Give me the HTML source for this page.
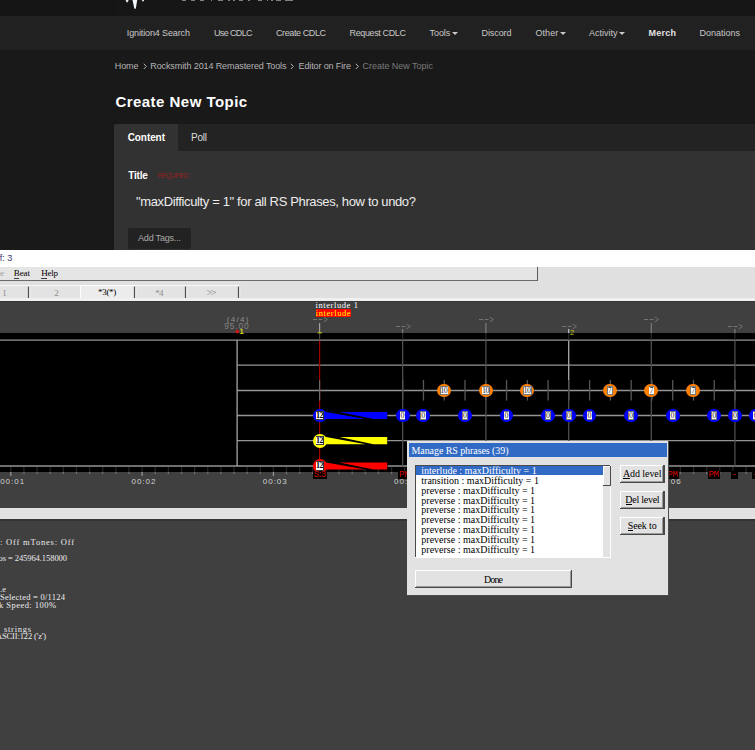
<!DOCTYPE html>
<html><head><meta charset="utf-8"><title>Create New Topic</title>
<style>
html,body{margin:0;padding:0;}
body{width:755px;height:750px;overflow:hidden;background:#191919;position:relative;font-family:"Liberation Sans", sans-serif;}
#root{position:absolute;left:0;top:0;width:755px;height:750px;overflow:hidden;}
#root div,#root span,#root svg{position:absolute;display:block;}
#root span{white-space:pre;line-height:1;}
</style></head><body><div id="root">
<div style="left:0.00px;top:0.00px;width:755.00px;height:16.00px;background:#161616;"></div>
<div style="left:0.00px;top:0.00px;width:115.00px;height:16.00px;background:#151515;"></div>
<svg style="left:120px;top:0" width="180" height="12" viewBox="0 0 180 12"><polygon points="12.5,0 17.2,0 16,7.6 15.4,9.1 14.7,9.1 14.1,7.6" fill="#f2f7fa"/><polygon points="5.6,0 8.6,0 7.8,2.3 6.5,2.3" fill="#e4e8ea"/><polygon points="21.8,0 24.2,0 23.4,1.4 22.6,1.4" fill="#e4e8ea"/></svg>
<div style="left:181.60px;top:0.00px;width:4.30px;height:1.20px;background:#808080;"></div>
<div style="left:191.20px;top:0.00px;width:4.00px;height:1.20px;background:#808080;"></div>
<div style="left:200.20px;top:0.00px;width:3.80px;height:1.20px;background:#808080;"></div>
<div style="left:210.60px;top:0.00px;width:1.40px;height:1.20px;background:#808080;"></div>
<div style="left:218.40px;top:0.00px;width:4.60px;height:1.20px;background:#808080;"></div>
<div style="left:228.00px;top:0.00px;width:2.00px;height:1.20px;background:#808080;"></div>
<div style="left:233.00px;top:0.00px;width:1.60px;height:1.20px;background:#808080;"></div>
<div style="left:238.70px;top:0.00px;width:4.20px;height:1.20px;background:#808080;"></div>
<div style="left:248.20px;top:0.00px;width:1.50px;height:1.20px;background:#808080;"></div>
<div style="left:257.80px;top:0.00px;width:4.20px;height:1.20px;background:#808080;"></div>
<div style="left:266.90px;top:0.00px;width:1.60px;height:1.20px;background:#808080;"></div>
<div style="left:271.00px;top:0.00px;width:1.70px;height:1.20px;background:#808080;"></div>
<div style="left:276.30px;top:0.00px;width:4.70px;height:1.20px;background:#808080;"></div>
<div style="left:285.00px;top:0.00px;width:8.40px;height:1.20px;background:#808080;"></div>
<div style="left:0.00px;top:16.00px;width:755.00px;height:33.60px;background:#212121;"></div>
<span style="left:126.80px;top:29.00px;font-size:9px;color:#c8c8c8;letter-spacing:-0.123px;">Ignition4 Search</span>
<span style="left:214.00px;top:29.00px;font-size:9px;color:#c8c8c8;letter-spacing:-0.645px;">Use CDLC</span>
<span style="left:276.00px;top:29.00px;font-size:9px;color:#c8c8c8;letter-spacing:-0.403px;">Create CDLC</span>
<span style="left:349.50px;top:29.00px;font-size:9px;color:#c8c8c8;letter-spacing:-0.366px;">Request CDLC</span>
<span style="left:429.50px;top:29.00px;font-size:9px;color:#c8c8c8;letter-spacing:-0.054px;">Tools</span>
<span style="left:481.50px;top:29.00px;font-size:9px;color:#c8c8c8;letter-spacing:-0.086px;">Discord</span>
<span style="left:535.50px;top:29.00px;font-size:9px;color:#c8c8c8;letter-spacing:0.046px;">Other</span>
<span style="left:589.10px;top:29.00px;font-size:9px;color:#c8c8c8;letter-spacing:-0.002px;">Activity</span>
<span style="left:699.50px;top:29.00px;font-size:9px;color:#c8c8c8;letter-spacing:-0.004px;">Donations</span>
<span style="left:648.50px;top:29.00px;font-size:9px;font-weight:bold;color:#e2e2e2;letter-spacing:0.246px;">Merch</span>
<div style="left:452.3px;top:31.8px;width:0;height:0;border-left:3.2px solid transparent;border-right:3.2px solid transparent;border-top:3.4px solid #c8c8c8;"></div>
<div style="left:560.2px;top:31.8px;width:0;height:0;border-left:3.2px solid transparent;border-right:3.2px solid transparent;border-top:3.4px solid #c8c8c8;"></div>
<div style="left:619.4px;top:31.8px;width:0;height:0;border-left:3.2px solid transparent;border-right:3.2px solid transparent;border-top:3.4px solid #c8c8c8;"></div>
<span style="left:114.80px;top:62.00px;font-size:9px;color:#b4b4b4;letter-spacing:-0.139px;">Home</span>
<span style="left:150.30px;top:62.00px;font-size:9px;color:#b4b4b4;letter-spacing:-0.107px;">Rocksmith 2014 Remastered Tools</span>
<span style="left:298.50px;top:62.00px;font-size:9px;color:#b4b4b4;letter-spacing:-0.118px;">Editor on Fire</span>
<svg style="left:142.6px;top:62.5px" width="5" height="7" viewBox="0 0 5 7"><polyline points="0.8,0.8 3.4,3.4 0.8,6" fill="none" stroke="#b4b4b4" stroke-width="1"/></svg>
<svg style="left:290px;top:62.5px" width="5" height="7" viewBox="0 0 5 7"><polyline points="0.8,0.8 3.4,3.4 0.8,6" fill="none" stroke="#b4b4b4" stroke-width="1"/></svg>
<svg style="left:355px;top:62.5px" width="5" height="7" viewBox="0 0 5 7"><polyline points="0.8,0.8 3.4,3.4 0.8,6" fill="none" stroke="#b4b4b4" stroke-width="1"/></svg>
<span style="left:362.50px;top:62.00px;font-size:9px;color:#7a7a7a;letter-spacing:-0.025px;">Create New Topic</span>
<span style="left:115.40px;top:94.00px;font-size:15px;font-weight:bold;color:#ffffff;letter-spacing:0.469px;">Create New Topic</span>
<div style="left:114.20px;top:124.00px;width:641.00px;height:126.00px;background:#323232;border-radius:2px 0 0 0;"></div>
<div style="left:178.00px;top:124.00px;width:577.00px;height:27.20px;background:#232323;"></div>
<span style="left:127.70px;top:133.00px;font-size:10px;font-weight:bold;color:#ffffff;letter-spacing:-0.080px;">Content</span>
<span style="left:191.00px;top:133.00px;font-size:10px;color:#dddddd;letter-spacing:-0.229px;">Poll</span>
<span style="left:128.20px;top:171.00px;font-size:10px;font-weight:bold;color:#ffffff;letter-spacing:-0.198px;">Title</span>
<span style="left:157.40px;top:172.00px;font-size:7.5px;color:#8e2222;letter-spacing:-1.099px;">REQUIRED</span>
<span style="left:136.00px;top:195.00px;font-size:13px;color:#ececec;letter-spacing:-0.361px;">"maxDifficulty = 1" for all RS Phrases, how to undo?</span>
<div style="left:127.70px;top:228.00px;width:63.50px;height:20.60px;background:#222222;border-radius:2px;"></div>
<span style="left:138.00px;top:234.00px;font-size:9px;color:#a8a8a8;letter-spacing:-0.188px;">Add Tags...</span>
<div style="left:0.00px;top:250.00px;width:755.00px;height:17.00px;background:#ffffff;"></div>
<span style="left:-2.60px;top:254.00px;font-size:9px;color:#3a3474;">ff: 3</span>
<div style="left:0.00px;top:267.00px;width:755.00px;height:34.00px;background:#e0e0e0;"></div>
<div style="left:0.00px;top:267.00px;width:537.00px;height:13.00px;background:#e5e5e5;"></div>
<span style="left:0.00px;top:269.00px;font-size:9px;font-family:'Liberation Serif', serif;color:#a0a0a0;">e</span>
<span style="left:13.80px;top:269.00px;font-size:9px;font-family:'Liberation Serif', serif;color:#000;letter-spacing:-0.100px;">Beat</span>
<span style="left:41.30px;top:269.00px;font-size:9px;font-family:'Liberation Serif', serif;color:#000;letter-spacing:-0.267px;">Help</span>
<div style="left:13.90px;top:277.70px;width:5.20px;height:1.00px;background:#3a3a3a;"></div>
<div style="left:41.20px;top:277.70px;width:5.60px;height:1.00px;background:#3a3a3a;"></div>
<div style="left:0.00px;top:279.80px;width:538.00px;height:1.50px;background:#6c6c6c;"></div>
<div style="left:536.60px;top:267.00px;width:1.50px;height:14.20px;background:#5c5c5c;"></div>
<div style="left:0.00px;top:285.00px;width:238.60px;height:1.20px;background:#f6f6f6;"></div>
<div style="left:0.00px;top:286.20px;width:238.60px;height:12.00px;background:#e3e3e3;"></div>
<div style="left:81.00px;top:285.20px;width:53.60px;height:13.60px;background:#ececec;"></div>
<div style="left:81.00px;top:285.20px;width:53.60px;height:1.00px;background:#ffffff;"></div>
<div style="left:80.30px;top:285.20px;width:1.00px;height:13.60px;background:#ffffff;"></div>
<svg style="left:0;top:0" width="755" height="750" viewBox="0 0 755 750"><line x1="28.60" y1="286.60" x2="28.60" y2="298.40" stroke="#4e4e4e" stroke-width="1.4"/><line x1="29.80" y1="286.60" x2="29.80" y2="298.40" stroke="#f4f4f4" stroke-width="1"/><line x1="134.60" y1="286.60" x2="134.60" y2="298.40" stroke="#4e4e4e" stroke-width="1.4"/><line x1="135.80" y1="286.60" x2="135.80" y2="298.40" stroke="#f4f4f4" stroke-width="1"/><line x1="185.60" y1="286.60" x2="185.60" y2="298.40" stroke="#4e4e4e" stroke-width="1.4"/><line x1="186.80" y1="286.60" x2="186.80" y2="298.40" stroke="#f4f4f4" stroke-width="1"/><line x1="238.60" y1="286.60" x2="238.60" y2="298.40" stroke="#4e4e4e" stroke-width="1.4"/><line x1="239.80" y1="286.60" x2="239.80" y2="298.40" stroke="#f4f4f4" stroke-width="1"/></svg>
<span style="left:2.20px;top:289.00px;font-size:9px;font-family:'Liberation Serif', serif;color:#8c8c8c;">1</span>
<span style="left:54.20px;top:289.00px;font-size:9px;font-family:'Liberation Serif', serif;color:#8c8c8c;">2</span>
<span style="left:98.10px;top:288.00px;font-size:9px;font-family:'Liberation Serif', serif;color:#000;letter-spacing:-0.350px;">*3(*)</span>
<span style="left:155.30px;top:289.00px;font-size:9px;font-family:'Liberation Serif', serif;color:#8c8c8c;letter-spacing:-0.900px;">*4</span>
<span style="left:206.60px;top:288.00px;font-size:10px;font-family:'Liberation Serif', serif;color:#808080;letter-spacing:-1.481px;">&gt;&gt;</span>
<div style="left:0.00px;top:298.30px;width:755.00px;height:2.30px;background:#f0f0f0;"></div>
<div style="left:0.00px;top:300.50px;width:755.00px;height:32.80px;background:#404040;"></div>
<div style="left:0.00px;top:300.60px;width:755.00px;height:1.30px;background:#353535;"></div>
<div style="left:0.00px;top:333.20px;width:755.00px;height:138.60px;background:#000;"></div>
<div style="left:0.00px;top:471.80px;width:755.00px;height:36.20px;background:#404040;"></div>
<div style="left:0.00px;top:508.00px;width:755.00px;height:11.00px;background:#e1e1e1;"></div>
<div style="left:0.00px;top:519.00px;width:755.00px;height:231.00px;background:#404040;"></div>
<div style="left:0.00px;top:519.00px;width:755.00px;height:1.50px;background:#333333;"></div>
<svg style="left:0;top:0" width="755" height="750" viewBox="0 0 755 750"><line x1="0.00" y1="340.10" x2="755.00" y2="340.10" stroke="#949494" stroke-width="1.3"/><line x1="237.00" y1="365.10" x2="755.00" y2="365.10" stroke="#949494" stroke-width="1.3"/><line x1="237.00" y1="390.50" x2="755.00" y2="390.50" stroke="#949494" stroke-width="1.3"/><line x1="237.00" y1="415.50" x2="755.00" y2="415.50" stroke="#949494" stroke-width="1.3"/><line x1="237.00" y1="440.60" x2="755.00" y2="440.60" stroke="#949494" stroke-width="1.3"/><line x1="0.00" y1="466.00" x2="755.00" y2="466.00" stroke="#949494" stroke-width="1.3"/><line x1="237.10" y1="340.00" x2="237.10" y2="466.00" stroke="#a4a4a4" stroke-width="1.3"/><line x1="319.60" y1="323.00" x2="319.60" y2="333.20" stroke="#a0a0a0" stroke-width="1.2"/><line x1="319.60" y1="333.20" x2="319.60" y2="339.50" stroke="#484848" stroke-width="1.2"/><line x1="319.60" y1="340.70" x2="319.60" y2="466.00" stroke="#a40000" stroke-width="1.2"/><line x1="319.60" y1="380.20" x2="319.60" y2="400.60" stroke="#686868" stroke-width="1.2"/><line x1="317.60" y1="332.80" x2="322.00" y2="332.80" stroke="#c4c400" stroke-width="1.1"/><line x1="402.65" y1="329.00" x2="402.65" y2="333.20" stroke="#7c7c7c" stroke-width="1.2"/><line x1="402.65" y1="333.20" x2="402.65" y2="339.40" stroke="#262626" stroke-width="1.3"/><line x1="402.65" y1="340.80" x2="402.65" y2="466.00" stroke="#4e4e4e" stroke-width="1.3"/><line x1="485.90" y1="323.00" x2="485.90" y2="333.20" stroke="#7c7c7c" stroke-width="1.2"/><line x1="485.90" y1="333.20" x2="485.90" y2="339.40" stroke="#262626" stroke-width="1.3"/><line x1="485.90" y1="340.80" x2="485.90" y2="466.00" stroke="#4e4e4e" stroke-width="1.3"/><line x1="568.70" y1="329.00" x2="568.70" y2="333.20" stroke="#c4c4c4" stroke-width="1.2"/><line x1="568.70" y1="333.20" x2="568.70" y2="339.40" stroke="#262626" stroke-width="1.3"/><line x1="568.70" y1="340.80" x2="568.70" y2="380.30" stroke="#a8a8a8" stroke-width="1.3"/><line x1="568.70" y1="380.30" x2="568.70" y2="466.00" stroke="#4e4e4e" stroke-width="1.3"/><line x1="651.30" y1="323.00" x2="651.30" y2="333.20" stroke="#7c7c7c" stroke-width="1.2"/><line x1="651.30" y1="333.20" x2="651.30" y2="339.40" stroke="#262626" stroke-width="1.3"/><line x1="651.30" y1="340.80" x2="651.30" y2="466.00" stroke="#4e4e4e" stroke-width="1.3"/><line x1="734.90" y1="329.00" x2="734.90" y2="333.20" stroke="#7c7c7c" stroke-width="1.2"/><line x1="734.90" y1="333.20" x2="734.90" y2="339.40" stroke="#262626" stroke-width="1.3"/><line x1="734.90" y1="340.80" x2="734.90" y2="466.00" stroke="#4e4e4e" stroke-width="1.3"/><line x1="402.70" y1="379.90" x2="402.70" y2="400.60" stroke="#565656" stroke-width="1.3"/><line x1="423.47" y1="379.90" x2="423.47" y2="400.60" stroke="#565656" stroke-width="1.3"/><line x1="444.24" y1="379.90" x2="444.24" y2="400.60" stroke="#565656" stroke-width="1.3"/><line x1="465.01" y1="379.90" x2="465.01" y2="400.60" stroke="#565656" stroke-width="1.3"/><line x1="485.78" y1="379.90" x2="485.78" y2="400.60" stroke="#565656" stroke-width="1.3"/><line x1="506.55" y1="379.90" x2="506.55" y2="400.60" stroke="#565656" stroke-width="1.3"/><line x1="527.32" y1="379.90" x2="527.32" y2="400.60" stroke="#565656" stroke-width="1.3"/><line x1="548.09" y1="379.90" x2="548.09" y2="400.60" stroke="#565656" stroke-width="1.3"/><line x1="568.86" y1="379.90" x2="568.86" y2="400.60" stroke="#565656" stroke-width="1.3"/><line x1="589.63" y1="379.90" x2="589.63" y2="400.60" stroke="#565656" stroke-width="1.3"/><line x1="610.40" y1="379.90" x2="610.40" y2="400.60" stroke="#565656" stroke-width="1.3"/><line x1="631.17" y1="379.90" x2="631.17" y2="400.60" stroke="#565656" stroke-width="1.3"/><line x1="651.94" y1="379.90" x2="651.94" y2="400.60" stroke="#565656" stroke-width="1.3"/><line x1="672.71" y1="379.90" x2="672.71" y2="400.60" stroke="#565656" stroke-width="1.3"/><line x1="693.48" y1="379.90" x2="693.48" y2="400.60" stroke="#565656" stroke-width="1.3"/><line x1="714.25" y1="379.90" x2="714.25" y2="400.60" stroke="#565656" stroke-width="1.3"/><line x1="735.02" y1="379.90" x2="735.02" y2="400.60" stroke="#565656" stroke-width="1.3"/><line x1="755.79" y1="379.90" x2="755.79" y2="400.60" stroke="#565656" stroke-width="1.3"/></svg>
<svg style="left:313px;top:316.1px" width="16" height="7" viewBox="0 0 16 7"><path d="M0 3.5H4M5.5 3.5H9.5M10.8 1.2L14.4 3.5L10.8 5.8" fill="none" stroke="#747474" stroke-width="1"/></svg>
<svg style="left:395.6px;top:322.8px" width="16" height="7" viewBox="0 0 16 7"><path d="M0 3.5H4M5.5 3.5H9.5M10.8 1.2L14.4 3.5L10.8 5.8" fill="none" stroke="#747474" stroke-width="1"/></svg>
<svg style="left:479px;top:316.1px" width="16" height="7" viewBox="0 0 16 7"><path d="M0 3.5H4M5.5 3.5H9.5M10.8 1.2L14.4 3.5L10.8 5.8" fill="none" stroke="#747474" stroke-width="1"/></svg>
<svg style="left:562px;top:322.8px" width="16" height="7" viewBox="0 0 16 7"><path d="M0 3.5H4M5.5 3.5H9.5M10.8 1.2L14.4 3.5L10.8 5.8" fill="none" stroke="#747474" stroke-width="1"/></svg>
<svg style="left:644.3px;top:316.1px" width="16" height="7" viewBox="0 0 16 7"><path d="M0 3.5H4M5.5 3.5H9.5M10.8 1.2L14.4 3.5L10.8 5.8" fill="none" stroke="#747474" stroke-width="1"/></svg>
<svg style="left:727.8px;top:322.8px" width="16" height="7" viewBox="0 0 16 7"><path d="M0 3.5H4M5.5 3.5H9.5M10.8 1.2L14.4 3.5L10.8 5.8" fill="none" stroke="#747474" stroke-width="1"/></svg>
<span style="left:226.80px;top:316.00px;font-size:8px;color:#8e8e8e;letter-spacing:1.287px;">(4/4)</span>
<span style="left:224.30px;top:322.00px;font-size:8.3px;color:#808080;letter-spacing:0.884px;">95.00</span>
<div style="left:235.50px;top:330.20px;width:2.60px;height:2.60px;background:#e01010;transform:rotate(45deg);"></div>
<span style="left:239.40px;top:328.00px;font-size:7.5px;font-weight:bold;color:#dcdc10;">1</span>
<span style="left:570.00px;top:329.00px;font-size:7.5px;color:#c8c810;">2</span>
<span style="left:315.60px;top:301.00px;font-size:8.5px;font-family:'Liberation Serif', serif;color:#ffffff;letter-spacing:0.571px;">interlude 1</span>
<div style="left:315.80px;top:309.40px;width:35.40px;height:8.00px;background:#ff0000;"></div>
<span style="left:315.80px;top:309.00px;font-size:8.5px;font-family:'Liberation Serif', serif;color:#ffff00;letter-spacing:0.573px;">interlude</span>
<span style="left:0.20px;top:478.00px;font-size:8px;color:#d2d2d2;letter-spacing:0.967px;">00:01</span>
<span style="left:131.50px;top:478.00px;font-size:8px;color:#d2d2d2;letter-spacing:0.967px;">00:02</span>
<span style="left:262.80px;top:478.00px;font-size:8px;color:#d2d2d2;letter-spacing:0.967px;">00:03</span>
<span style="left:394.10px;top:478.00px;font-size:8px;color:#d2d2d2;letter-spacing:0.967px;">00:04</span>
<span style="left:525.40px;top:478.00px;font-size:8px;color:#d2d2d2;letter-spacing:0.967px;">00:05</span>
<span style="left:656.70px;top:478.00px;font-size:8px;color:#d2d2d2;letter-spacing:0.967px;">00:06</span>
<svg style="left:0;top:0" width="755" height="750" viewBox="0 0 755 750"><line x1="10.80" y1="467.00" x2="10.80" y2="472.00" stroke="#242424" stroke-width="1.3"/><line x1="10.80" y1="472.00" x2="10.80" y2="476.00" stroke="#909090" stroke-width="1.4"/><line x1="23.93" y1="467.00" x2="23.93" y2="472.00" stroke="#242424" stroke-width="1.3"/><line x1="23.93" y1="472.20" x2="23.93" y2="474.00" stroke="#787878" stroke-width="1.3"/><line x1="37.06" y1="467.00" x2="37.06" y2="472.00" stroke="#242424" stroke-width="1.3"/><line x1="37.06" y1="472.20" x2="37.06" y2="474.00" stroke="#787878" stroke-width="1.3"/><line x1="50.19" y1="467.00" x2="50.19" y2="472.00" stroke="#242424" stroke-width="1.3"/><line x1="50.19" y1="472.20" x2="50.19" y2="474.00" stroke="#787878" stroke-width="1.3"/><line x1="63.32" y1="467.00" x2="63.32" y2="472.00" stroke="#242424" stroke-width="1.3"/><line x1="63.32" y1="472.20" x2="63.32" y2="474.00" stroke="#787878" stroke-width="1.3"/><line x1="76.45" y1="467.00" x2="76.45" y2="472.00" stroke="#242424" stroke-width="1.3"/><line x1="76.45" y1="472.20" x2="76.45" y2="474.00" stroke="#787878" stroke-width="1.3"/><line x1="89.58" y1="467.00" x2="89.58" y2="472.00" stroke="#242424" stroke-width="1.3"/><line x1="89.58" y1="472.20" x2="89.58" y2="474.00" stroke="#787878" stroke-width="1.3"/><line x1="102.71" y1="467.00" x2="102.71" y2="472.00" stroke="#242424" stroke-width="1.3"/><line x1="102.71" y1="472.20" x2="102.71" y2="474.00" stroke="#787878" stroke-width="1.3"/><line x1="115.84" y1="467.00" x2="115.84" y2="472.00" stroke="#242424" stroke-width="1.3"/><line x1="115.84" y1="472.20" x2="115.84" y2="474.00" stroke="#787878" stroke-width="1.3"/><line x1="128.97" y1="467.00" x2="128.97" y2="472.00" stroke="#242424" stroke-width="1.3"/><line x1="128.97" y1="472.20" x2="128.97" y2="474.00" stroke="#787878" stroke-width="1.3"/><line x1="142.10" y1="467.00" x2="142.10" y2="472.00" stroke="#242424" stroke-width="1.3"/><line x1="142.10" y1="472.00" x2="142.10" y2="476.00" stroke="#909090" stroke-width="1.4"/><line x1="155.23" y1="467.00" x2="155.23" y2="472.00" stroke="#242424" stroke-width="1.3"/><line x1="155.23" y1="472.20" x2="155.23" y2="474.00" stroke="#787878" stroke-width="1.3"/><line x1="168.36" y1="467.00" x2="168.36" y2="472.00" stroke="#242424" stroke-width="1.3"/><line x1="168.36" y1="472.20" x2="168.36" y2="474.00" stroke="#787878" stroke-width="1.3"/><line x1="181.49" y1="467.00" x2="181.49" y2="472.00" stroke="#242424" stroke-width="1.3"/><line x1="181.49" y1="472.20" x2="181.49" y2="474.00" stroke="#787878" stroke-width="1.3"/><line x1="194.62" y1="467.00" x2="194.62" y2="472.00" stroke="#242424" stroke-width="1.3"/><line x1="194.62" y1="472.20" x2="194.62" y2="474.00" stroke="#787878" stroke-width="1.3"/><line x1="207.75" y1="467.00" x2="207.75" y2="472.00" stroke="#242424" stroke-width="1.3"/><line x1="207.75" y1="472.20" x2="207.75" y2="474.00" stroke="#787878" stroke-width="1.3"/><line x1="220.88" y1="467.00" x2="220.88" y2="472.00" stroke="#242424" stroke-width="1.3"/><line x1="220.88" y1="472.20" x2="220.88" y2="474.00" stroke="#787878" stroke-width="1.3"/><line x1="234.01" y1="467.00" x2="234.01" y2="472.00" stroke="#242424" stroke-width="1.3"/><line x1="234.01" y1="472.20" x2="234.01" y2="474.00" stroke="#787878" stroke-width="1.3"/><line x1="247.14" y1="467.00" x2="247.14" y2="472.00" stroke="#242424" stroke-width="1.3"/><line x1="247.14" y1="472.20" x2="247.14" y2="474.00" stroke="#787878" stroke-width="1.3"/><line x1="260.27" y1="467.00" x2="260.27" y2="472.00" stroke="#242424" stroke-width="1.3"/><line x1="260.27" y1="472.20" x2="260.27" y2="474.00" stroke="#787878" stroke-width="1.3"/><line x1="273.40" y1="467.00" x2="273.40" y2="472.00" stroke="#242424" stroke-width="1.3"/><line x1="273.40" y1="472.00" x2="273.40" y2="476.00" stroke="#909090" stroke-width="1.4"/><line x1="286.53" y1="467.00" x2="286.53" y2="472.00" stroke="#242424" stroke-width="1.3"/><line x1="286.53" y1="472.20" x2="286.53" y2="474.00" stroke="#787878" stroke-width="1.3"/><line x1="299.66" y1="467.00" x2="299.66" y2="472.00" stroke="#242424" stroke-width="1.3"/><line x1="299.66" y1="472.20" x2="299.66" y2="474.00" stroke="#787878" stroke-width="1.3"/><line x1="312.79" y1="467.00" x2="312.79" y2="472.00" stroke="#242424" stroke-width="1.3"/><line x1="312.79" y1="472.20" x2="312.79" y2="474.00" stroke="#787878" stroke-width="1.3"/><line x1="325.92" y1="467.00" x2="325.92" y2="472.00" stroke="#242424" stroke-width="1.3"/><line x1="325.92" y1="472.20" x2="325.92" y2="474.00" stroke="#787878" stroke-width="1.3"/><line x1="339.05" y1="467.00" x2="339.05" y2="472.00" stroke="#242424" stroke-width="1.3"/><line x1="339.05" y1="472.20" x2="339.05" y2="474.00" stroke="#787878" stroke-width="1.3"/><line x1="352.18" y1="467.00" x2="352.18" y2="472.00" stroke="#242424" stroke-width="1.3"/><line x1="352.18" y1="472.20" x2="352.18" y2="474.00" stroke="#787878" stroke-width="1.3"/><line x1="365.31" y1="467.00" x2="365.31" y2="472.00" stroke="#242424" stroke-width="1.3"/><line x1="365.31" y1="472.20" x2="365.31" y2="474.00" stroke="#787878" stroke-width="1.3"/><line x1="378.44" y1="467.00" x2="378.44" y2="472.00" stroke="#242424" stroke-width="1.3"/><line x1="378.44" y1="472.20" x2="378.44" y2="474.00" stroke="#787878" stroke-width="1.3"/><line x1="391.57" y1="467.00" x2="391.57" y2="472.00" stroke="#242424" stroke-width="1.3"/><line x1="391.57" y1="472.20" x2="391.57" y2="474.00" stroke="#787878" stroke-width="1.3"/><line x1="404.70" y1="467.00" x2="404.70" y2="472.00" stroke="#242424" stroke-width="1.3"/><line x1="404.70" y1="472.00" x2="404.70" y2="476.00" stroke="#909090" stroke-width="1.4"/><line x1="417.83" y1="467.00" x2="417.83" y2="472.00" stroke="#242424" stroke-width="1.3"/><line x1="417.83" y1="472.20" x2="417.83" y2="474.00" stroke="#787878" stroke-width="1.3"/><line x1="430.96" y1="467.00" x2="430.96" y2="472.00" stroke="#242424" stroke-width="1.3"/><line x1="430.96" y1="472.20" x2="430.96" y2="474.00" stroke="#787878" stroke-width="1.3"/><line x1="444.09" y1="467.00" x2="444.09" y2="472.00" stroke="#242424" stroke-width="1.3"/><line x1="444.09" y1="472.20" x2="444.09" y2="474.00" stroke="#787878" stroke-width="1.3"/><line x1="457.22" y1="467.00" x2="457.22" y2="472.00" stroke="#242424" stroke-width="1.3"/><line x1="457.22" y1="472.20" x2="457.22" y2="474.00" stroke="#787878" stroke-width="1.3"/><line x1="470.35" y1="467.00" x2="470.35" y2="472.00" stroke="#242424" stroke-width="1.3"/><line x1="470.35" y1="472.20" x2="470.35" y2="474.00" stroke="#787878" stroke-width="1.3"/><line x1="483.48" y1="467.00" x2="483.48" y2="472.00" stroke="#242424" stroke-width="1.3"/><line x1="483.48" y1="472.20" x2="483.48" y2="474.00" stroke="#787878" stroke-width="1.3"/><line x1="496.61" y1="467.00" x2="496.61" y2="472.00" stroke="#242424" stroke-width="1.3"/><line x1="496.61" y1="472.20" x2="496.61" y2="474.00" stroke="#787878" stroke-width="1.3"/><line x1="509.74" y1="467.00" x2="509.74" y2="472.00" stroke="#242424" stroke-width="1.3"/><line x1="509.74" y1="472.20" x2="509.74" y2="474.00" stroke="#787878" stroke-width="1.3"/><line x1="522.87" y1="467.00" x2="522.87" y2="472.00" stroke="#242424" stroke-width="1.3"/><line x1="522.87" y1="472.20" x2="522.87" y2="474.00" stroke="#787878" stroke-width="1.3"/><line x1="536.00" y1="467.00" x2="536.00" y2="472.00" stroke="#242424" stroke-width="1.3"/><line x1="536.00" y1="472.00" x2="536.00" y2="476.00" stroke="#909090" stroke-width="1.4"/><line x1="549.13" y1="467.00" x2="549.13" y2="472.00" stroke="#242424" stroke-width="1.3"/><line x1="549.13" y1="472.20" x2="549.13" y2="474.00" stroke="#787878" stroke-width="1.3"/><line x1="562.26" y1="467.00" x2="562.26" y2="472.00" stroke="#242424" stroke-width="1.3"/><line x1="562.26" y1="472.20" x2="562.26" y2="474.00" stroke="#787878" stroke-width="1.3"/><line x1="575.39" y1="467.00" x2="575.39" y2="472.00" stroke="#242424" stroke-width="1.3"/><line x1="575.39" y1="472.20" x2="575.39" y2="474.00" stroke="#787878" stroke-width="1.3"/><line x1="588.52" y1="467.00" x2="588.52" y2="472.00" stroke="#242424" stroke-width="1.3"/><line x1="588.52" y1="472.20" x2="588.52" y2="474.00" stroke="#787878" stroke-width="1.3"/><line x1="601.65" y1="467.00" x2="601.65" y2="472.00" stroke="#242424" stroke-width="1.3"/><line x1="601.65" y1="472.20" x2="601.65" y2="474.00" stroke="#787878" stroke-width="1.3"/><line x1="614.78" y1="467.00" x2="614.78" y2="472.00" stroke="#242424" stroke-width="1.3"/><line x1="614.78" y1="472.20" x2="614.78" y2="474.00" stroke="#787878" stroke-width="1.3"/><line x1="627.91" y1="467.00" x2="627.91" y2="472.00" stroke="#242424" stroke-width="1.3"/><line x1="627.91" y1="472.20" x2="627.91" y2="474.00" stroke="#787878" stroke-width="1.3"/><line x1="641.04" y1="467.00" x2="641.04" y2="472.00" stroke="#242424" stroke-width="1.3"/><line x1="641.04" y1="472.20" x2="641.04" y2="474.00" stroke="#787878" stroke-width="1.3"/><line x1="654.17" y1="467.00" x2="654.17" y2="472.00" stroke="#242424" stroke-width="1.3"/><line x1="654.17" y1="472.20" x2="654.17" y2="474.00" stroke="#787878" stroke-width="1.3"/><line x1="667.30" y1="467.00" x2="667.30" y2="472.00" stroke="#242424" stroke-width="1.3"/><line x1="667.30" y1="472.00" x2="667.30" y2="476.00" stroke="#909090" stroke-width="1.4"/><line x1="680.43" y1="467.00" x2="680.43" y2="472.00" stroke="#242424" stroke-width="1.3"/><line x1="680.43" y1="472.20" x2="680.43" y2="474.00" stroke="#787878" stroke-width="1.3"/><line x1="693.56" y1="467.00" x2="693.56" y2="472.00" stroke="#242424" stroke-width="1.3"/><line x1="693.56" y1="472.20" x2="693.56" y2="474.00" stroke="#787878" stroke-width="1.3"/><line x1="706.69" y1="467.00" x2="706.69" y2="472.00" stroke="#242424" stroke-width="1.3"/><line x1="706.69" y1="472.20" x2="706.69" y2="474.00" stroke="#787878" stroke-width="1.3"/><line x1="719.82" y1="467.00" x2="719.82" y2="472.00" stroke="#242424" stroke-width="1.3"/><line x1="719.82" y1="472.20" x2="719.82" y2="474.00" stroke="#787878" stroke-width="1.3"/><line x1="732.95" y1="467.00" x2="732.95" y2="472.00" stroke="#242424" stroke-width="1.3"/><line x1="732.95" y1="472.20" x2="732.95" y2="474.00" stroke="#787878" stroke-width="1.3"/><line x1="746.08" y1="467.00" x2="746.08" y2="472.00" stroke="#242424" stroke-width="1.3"/><line x1="746.08" y1="472.20" x2="746.08" y2="474.00" stroke="#787878" stroke-width="1.3"/><line x1="759.21" y1="467.00" x2="759.21" y2="472.00" stroke="#242424" stroke-width="1.3"/><line x1="759.21" y1="472.20" x2="759.21" y2="474.00" stroke="#787878" stroke-width="1.3"/></svg>
<div style="left:437.25px;top:383.55px;width:13.90px;height:13.90px;border-radius:50%;background:#ff8000;"></div>
<div style="left:439.90px;top:385.95px;width:8.60px;height:9.1px;background:#787878;"></div>
<div style="left:440.60px;top:386.65px;width:7.20px;height:7.7px;background:#f8f8f8;"></div>
<span style="left:440.20px;top:387.00px;font-size:8px;font-family:'Liberation Serif', serif;color:#303030;letter-spacing:-0.4px;">10</span>
<div style="left:478.95px;top:383.55px;width:13.90px;height:13.90px;border-radius:50%;background:#ff8000;"></div>
<div style="left:481.60px;top:385.95px;width:8.60px;height:9.1px;background:#787878;"></div>
<div style="left:482.30px;top:386.65px;width:7.20px;height:7.7px;background:#f8f8f8;"></div>
<span style="left:481.90px;top:387.00px;font-size:8px;font-family:'Liberation Serif', serif;color:#303030;letter-spacing:-0.4px;">10</span>
<div style="left:520.45px;top:383.55px;width:13.90px;height:13.90px;border-radius:50%;background:#ff8000;"></div>
<div style="left:523.10px;top:385.95px;width:8.60px;height:9.1px;background:#787878;"></div>
<div style="left:523.80px;top:386.65px;width:7.20px;height:7.7px;background:#f8f8f8;"></div>
<span style="left:523.40px;top:387.00px;font-size:8px;font-family:'Liberation Serif', serif;color:#303030;letter-spacing:-0.4px;">10</span>
<div style="left:602.85px;top:383.55px;width:13.90px;height:13.90px;border-radius:50%;background:#ff8000;"></div>
<div style="left:606.90px;top:385.95px;width:5.80px;height:9.1px;background:#787878;"></div>
<div style="left:607.60px;top:386.65px;width:4.40px;height:7.7px;background:#f8f8f8;"></div>
<span style="left:607.80px;top:387.00px;font-size:8px;font-family:'Liberation Serif', serif;color:#303030;letter-spacing:-0.4px;">7</span>
<div style="left:644.45px;top:383.55px;width:13.90px;height:13.90px;border-radius:50%;background:#ff8000;"></div>
<div style="left:648.50px;top:385.95px;width:5.80px;height:9.1px;background:#787878;"></div>
<div style="left:649.20px;top:386.65px;width:4.40px;height:7.7px;background:#f8f8f8;"></div>
<span style="left:649.40px;top:387.00px;font-size:8px;font-family:'Liberation Serif', serif;color:#303030;letter-spacing:-0.4px;">7</span>
<div style="left:686.25px;top:383.55px;width:13.90px;height:13.90px;border-radius:50%;background:#ff8000;"></div>
<div style="left:690.30px;top:385.95px;width:5.80px;height:9.1px;background:#787878;"></div>
<div style="left:691.00px;top:386.65px;width:4.40px;height:7.7px;background:#f8f8f8;"></div>
<span style="left:691.20px;top:387.00px;font-size:8px;font-family:'Liberation Serif', serif;color:#303030;letter-spacing:-0.4px;">7</span>
<div style="left:395.65px;top:408.55px;width:13.90px;height:13.90px;border-radius:50%;background:#0000ff;"></div>
<div style="left:399.70px;top:410.95px;width:5.80px;height:9.1px;background:#787878;"></div>
<div style="left:400.40px;top:411.65px;width:4.40px;height:7.7px;background:#f8f8f8;"></div>
<span style="left:400.60px;top:412.00px;font-size:8px;font-family:'Liberation Serif', serif;color:#303030;letter-spacing:-0.4px;">0</span>
<div style="left:416.42px;top:408.55px;width:13.90px;height:13.90px;border-radius:50%;background:#0000ff;"></div>
<div style="left:420.47px;top:410.95px;width:5.80px;height:9.1px;background:#787878;"></div>
<div style="left:421.17px;top:411.65px;width:4.40px;height:7.7px;background:#f8f8f8;"></div>
<span style="left:421.37px;top:412.00px;font-size:8px;font-family:'Liberation Serif', serif;color:#303030;letter-spacing:-0.4px;">0</span>
<div style="left:457.96px;top:408.55px;width:13.90px;height:13.90px;border-radius:50%;background:#0000ff;"></div>
<div style="left:462.01px;top:410.95px;width:5.80px;height:9.1px;background:#787878;"></div>
<div style="left:462.71px;top:411.65px;width:4.40px;height:7.7px;background:#f8f8f8;"></div>
<span style="left:462.91px;top:412.00px;font-size:8px;font-family:'Liberation Serif', serif;color:#303030;letter-spacing:-0.4px;">0</span>
<div style="left:499.50px;top:408.55px;width:13.90px;height:13.90px;border-radius:50%;background:#0000ff;"></div>
<div style="left:503.55px;top:410.95px;width:5.80px;height:9.1px;background:#787878;"></div>
<div style="left:504.25px;top:411.65px;width:4.40px;height:7.7px;background:#f8f8f8;"></div>
<span style="left:504.45px;top:412.00px;font-size:8px;font-family:'Liberation Serif', serif;color:#303030;letter-spacing:-0.4px;">0</span>
<div style="left:541.04px;top:408.55px;width:13.90px;height:13.90px;border-radius:50%;background:#0000ff;"></div>
<div style="left:545.09px;top:410.95px;width:5.80px;height:9.1px;background:#787878;"></div>
<div style="left:545.79px;top:411.65px;width:4.40px;height:7.7px;background:#f8f8f8;"></div>
<span style="left:545.99px;top:412.00px;font-size:8px;font-family:'Liberation Serif', serif;color:#303030;letter-spacing:-0.4px;">0</span>
<div style="left:561.81px;top:408.55px;width:13.90px;height:13.90px;border-radius:50%;background:#0000ff;"></div>
<div style="left:565.86px;top:410.95px;width:5.80px;height:9.1px;background:#787878;"></div>
<div style="left:566.56px;top:411.65px;width:4.40px;height:7.7px;background:#f8f8f8;"></div>
<span style="left:566.76px;top:412.00px;font-size:8px;font-family:'Liberation Serif', serif;color:#303030;letter-spacing:-0.4px;">0</span>
<div style="left:582.58px;top:408.55px;width:13.90px;height:13.90px;border-radius:50%;background:#0000ff;"></div>
<div style="left:586.63px;top:410.95px;width:5.80px;height:9.1px;background:#787878;"></div>
<div style="left:587.33px;top:411.65px;width:4.40px;height:7.7px;background:#f8f8f8;"></div>
<span style="left:587.53px;top:412.00px;font-size:8px;font-family:'Liberation Serif', serif;color:#303030;letter-spacing:-0.4px;">0</span>
<div style="left:624.12px;top:408.55px;width:13.90px;height:13.90px;border-radius:50%;background:#0000ff;"></div>
<div style="left:628.17px;top:410.95px;width:5.80px;height:9.1px;background:#787878;"></div>
<div style="left:628.87px;top:411.65px;width:4.40px;height:7.7px;background:#f8f8f8;"></div>
<span style="left:629.07px;top:412.00px;font-size:8px;font-family:'Liberation Serif', serif;color:#303030;letter-spacing:-0.4px;">0</span>
<div style="left:665.66px;top:408.55px;width:13.90px;height:13.90px;border-radius:50%;background:#0000ff;"></div>
<div style="left:669.71px;top:410.95px;width:5.80px;height:9.1px;background:#787878;"></div>
<div style="left:670.41px;top:411.65px;width:4.40px;height:7.7px;background:#f8f8f8;"></div>
<span style="left:670.61px;top:412.00px;font-size:8px;font-family:'Liberation Serif', serif;color:#303030;letter-spacing:-0.4px;">0</span>
<div style="left:707.20px;top:408.55px;width:13.90px;height:13.90px;border-radius:50%;background:#0000ff;"></div>
<div style="left:711.25px;top:410.95px;width:5.80px;height:9.1px;background:#787878;"></div>
<div style="left:711.95px;top:411.65px;width:4.40px;height:7.7px;background:#f8f8f8;"></div>
<span style="left:712.15px;top:412.00px;font-size:8px;font-family:'Liberation Serif', serif;color:#303030;letter-spacing:-0.4px;">0</span>
<div style="left:727.97px;top:408.55px;width:13.90px;height:13.90px;border-radius:50%;background:#0000ff;"></div>
<div style="left:732.02px;top:410.95px;width:5.80px;height:9.1px;background:#787878;"></div>
<div style="left:732.72px;top:411.65px;width:4.40px;height:7.7px;background:#f8f8f8;"></div>
<span style="left:732.92px;top:412.00px;font-size:8px;font-family:'Liberation Serif', serif;color:#303030;letter-spacing:-0.4px;">0</span>
<div style="left:748.74px;top:408.55px;width:13.90px;height:13.90px;border-radius:50%;background:#0000ff;"></div>
<div style="left:752.79px;top:410.95px;width:5.80px;height:9.1px;background:#787878;"></div>
<div style="left:753.49px;top:411.65px;width:4.40px;height:7.7px;background:#f8f8f8;"></div>
<span style="left:753.69px;top:412.00px;font-size:8px;font-family:'Liberation Serif', serif;color:#303030;letter-spacing:-0.4px;">0</span>
<svg style="left:0;top:0" width="755" height="750" viewBox="0 0 755 750"><rect x="323.9" y="411.9" width="63.5" height="7.2000000000000455" fill="#000"/><polygon points="323.9,411.9 325.9,411.9 365.9,419.1 323.9,419.1" fill="#0000ff"/><polygon points="339.4,411.9 387.2,411.9 387.2,419.1 373.4,419.1" fill="#0000ff"/></svg>
<div style="left:312.95px;top:408.55px;width:13.90px;height:13.90px;border-radius:50%;background:#0000ff;"></div>
<div style="left:315.60px;top:410.95px;width:8.60px;height:9.1px;background:#3a3a3a;"></div>
<div style="left:316.30px;top:411.65px;width:7.20px;height:7.7px;background:#f8f8f8;"></div>
<span style="left:315.90px;top:412.00px;font-size:8px;font-family:'Liberation Serif', serif;font-weight:bold;color:#000;letter-spacing:-0.4px;">12</span>
<svg style="left:0;top:0" width="755" height="750" viewBox="0 0 755 750"><rect x="323.9" y="437.0" width="63.5" height="7.2000000000000455" fill="#000"/><polygon points="323.9,437.0 325.9,437.0 365.9,444.20000000000005 323.9,444.20000000000005" fill="#ffff00"/><polygon points="339.4,437.0 387.2,437.0 387.2,444.20000000000005 373.4,444.20000000000005" fill="#ffff00"/></svg>
<div style="left:312.95px;top:433.65px;width:13.90px;height:13.90px;border-radius:50%;background:#ffff00;"></div>
<div style="left:315.60px;top:436.05px;width:8.60px;height:9.1px;background:#3a3a3a;"></div>
<div style="left:316.30px;top:436.75px;width:7.20px;height:7.7px;background:#f8f8f8;"></div>
<span style="left:315.90px;top:437.00px;font-size:8px;font-family:'Liberation Serif', serif;font-weight:bold;color:#000;letter-spacing:-0.4px;">12</span>
<svg style="left:0;top:0" width="755" height="750" viewBox="0 0 755 750"><rect x="323.9" y="462.4" width="63.5" height="7.2000000000000455" fill="#000"/><polygon points="323.9,462.4 325.9,462.4 365.9,469.6 323.9,469.6" fill="#ff0000"/><polygon points="339.4,462.4 387.2,462.4 387.2,469.6 373.4,469.6" fill="#ff0000"/></svg>
<div style="left:312.95px;top:459.05px;width:13.90px;height:13.90px;border-radius:50%;background:#ff0000;"></div>
<div style="left:315.60px;top:461.45px;width:8.60px;height:9.1px;background:#3a3a3a;"></div>
<div style="left:316.30px;top:462.15px;width:7.20px;height:7.7px;background:#f8f8f8;"></div>
<span style="left:315.90px;top:462.00px;font-size:8px;font-family:'Liberation Serif', serif;font-weight:bold;color:#000;letter-spacing:-0.4px;">12</span>
<div style="left:313.00px;top:470.60px;width:14.00px;height:8.00px;background:#000;"></div>
<span style="left:313.80px;top:471.00px;font-size:9px;font-family:'Liberation Mono', monospace;color:#dc0000;letter-spacing:-1.902px;">S:3</span>
<div style="left:398.20px;top:470.60px;width:12.20px;height:8.00px;background:#000;"></div>
<span style="left:399.00px;top:471.00px;font-size:9px;font-family:'Liberation Mono', monospace;color:#dc0000;letter-spacing:-0.212px;">PM</span>
<div style="left:666.40px;top:470.60px;width:12.20px;height:8.00px;background:#000;"></div>
<span style="left:667.20px;top:471.00px;font-size:9px;font-family:'Liberation Mono', monospace;color:#dc0000;letter-spacing:-0.212px;">PM</span>
<div style="left:707.60px;top:470.60px;width:12.20px;height:8.00px;background:#000;"></div>
<span style="left:708.40px;top:471.00px;font-size:9px;font-family:'Liberation Mono', monospace;color:#dc0000;letter-spacing:-0.212px;">PM</span>
<div style="left:730.90px;top:470.60px;width:7.00px;height:8.00px;background:#000;"></div>
<span style="left:731.70px;top:471.00px;font-size:9px;font-family:'Liberation Mono', monospace;color:#dc0000;">-</span>
<div style="left:751.70px;top:470.60px;width:7.00px;height:8.00px;background:#000;"></div>
<span style="left:752.50px;top:471.00px;font-size:9px;font-family:'Liberation Mono', monospace;color:#dc0000;">-</span>
<span style="left:0.00px;top:538.00px;font-size:8.5px;font-family:'Liberation Serif', serif;color:#ececec;letter-spacing:0.801px;">: Off mTones: Off</span>
<span style="left:-1.50px;top:554.00px;font-size:8.5px;font-family:'Liberation Serif', serif;color:#ececec;letter-spacing:-0.073px;">os = 245964.158000</span>
<span style="left:0.00px;top:585.00px;font-size:8.5px;font-family:'Liberation Serif', serif;color:#ececec;">.e</span>
<span style="left:0.00px;top:593.00px;font-size:8.5px;font-family:'Liberation Serif', serif;color:#ececec;letter-spacing:0.241px;">Selected = 0/1124</span>
<span style="left:-1.00px;top:601.00px;font-size:8.5px;font-family:'Liberation Serif', serif;color:#ececec;letter-spacing:0.461px;">k Speed: 100%</span>
<span style="left:4.00px;top:625.00px;font-size:8.5px;font-family:'Liberation Serif', serif;color:#ececec;letter-spacing:0.721px;">strings</span>
<span style="left:-4.00px;top:632.00px;font-size:8.5px;font-family:'Liberation Serif', serif;color:#ececec;letter-spacing:-0.138px;">ASCII:122 ('z')</span>
<div style="left:406.80px;top:441.00px;width:262.60px;height:155.00px;background:#4c4c4c;"></div>
<div style="left:406.80px;top:441.00px;width:261.50px;height:154.00px;background:#e2e2e2;"></div>
<div style="left:409.20px;top:443.20px;width:257.70px;height:13.80px;background:#316ac5;"></div>
<span style="left:411.50px;top:446.00px;font-size:10px;font-family:'Liberation Serif', serif;color:#ffffff;letter-spacing:-0.076px;">Manage RS phrases (39)</span>
<div style="left:415.40px;top:465.20px;width:196.00px;height:93.00px;background:#ffffff;"></div>
<div style="left:415.40px;top:465.20px;width:195.00px;height:92.00px;background:#4a4a4a;"></div>
<div style="left:416.30px;top:466.10px;width:194.10px;height:91.10px;background:#ffffff;"></div>
<div style="left:603.00px;top:466.10px;width:7.40px;height:91.10px;background:#e2e2e2;"></div>
<div style="left:603.00px;top:466.10px;width:7.80px;height:19.60px;background:#4a4a4a;"></div>
<div style="left:603.00px;top:466.10px;width:6.80px;height:18.60px;background:#ffffff;"></div>
<div style="left:603.90px;top:467.00px;width:5.90px;height:17.70px;background:#e2e2e2;"></div>
<div style="left:416.30px;top:466.10px;width:186.70px;height:9.10px;background:#316ac5;"></div>
<span style="left:421.30px;top:466.00px;font-size:10px;font-family:'Liberation Serif', serif;color:#ffffff;">interlude : maxDifficulty = 1</span>
<span style="left:421.30px;top:476.00px;font-size:10px;font-family:'Liberation Serif', serif;color:#000000;">transition : maxDifficulty = 1</span>
<span style="left:421.30px;top:486.00px;font-size:10px;font-family:'Liberation Serif', serif;color:#000000;">preverse : maxDifficulty = 1</span>
<span style="left:421.30px;top:496.00px;font-size:10px;font-family:'Liberation Serif', serif;color:#000000;">preverse : maxDifficulty = 1</span>
<span style="left:421.30px;top:505.00px;font-size:10px;font-family:'Liberation Serif', serif;color:#000000;">preverse : maxDifficulty = 1</span>
<span style="left:421.30px;top:515.00px;font-size:10px;font-family:'Liberation Serif', serif;color:#000000;">preverse : maxDifficulty = 1</span>
<span style="left:421.30px;top:525.00px;font-size:10px;font-family:'Liberation Serif', serif;color:#000000;">preverse : maxDifficulty = 1</span>
<span style="left:421.30px;top:535.00px;font-size:10px;font-family:'Liberation Serif', serif;color:#000000;">preverse : maxDifficulty = 1</span>
<span style="left:421.30px;top:545.00px;font-size:10px;font-family:'Liberation Serif', serif;color:#000000;">preverse : maxDifficulty = 1</span>
<div style="left:620.10px;top:464.70px;width:44.50px;height:18.10px;background:#484848;"></div>
<div style="left:620.10px;top:464.70px;width:43.40px;height:17.00px;background:#ffffff;"></div>
<div style="left:621.10px;top:465.70px;width:42.40px;height:16.00px;background:#9a9a9a;"></div>
<div style="left:621.10px;top:465.70px;width:41.40px;height:15.00px;background:#e2e2e2;"></div>
<span style="left:622.90px;top:469.00px;font-size:10px;font-family:'Liberation Serif', serif;color:#000;letter-spacing:-0.070px;">Add level</span>
<div style="left:623.20px;top:477.90px;width:6.50px;height:0.90px;background:#000;"></div>
<div style="left:620.10px;top:490.60px;width:44.50px;height:18.20px;background:#484848;"></div>
<div style="left:620.10px;top:490.60px;width:43.40px;height:17.10px;background:#ffffff;"></div>
<div style="left:621.10px;top:491.60px;width:42.40px;height:16.10px;background:#9a9a9a;"></div>
<div style="left:621.10px;top:491.60px;width:41.40px;height:15.10px;background:#e2e2e2;"></div>
<span style="left:625.30px;top:495.00px;font-size:10px;font-family:'Liberation Serif', serif;color:#000;letter-spacing:-0.259px;">Del level</span>
<div style="left:625.60px;top:503.90px;width:6.50px;height:0.90px;background:#000;"></div>
<div style="left:620.10px;top:516.60px;width:44.50px;height:18.20px;background:#484848;"></div>
<div style="left:620.10px;top:516.60px;width:43.40px;height:17.10px;background:#ffffff;"></div>
<div style="left:621.10px;top:517.60px;width:42.40px;height:16.10px;background:#9a9a9a;"></div>
<div style="left:621.10px;top:517.60px;width:41.40px;height:15.10px;background:#e2e2e2;"></div>
<span style="left:627.70px;top:521.00px;font-size:10px;font-family:'Liberation Serif', serif;color:#000;letter-spacing:-0.103px;">Seek to</span>
<div style="left:628.00px;top:530.20px;width:5.00px;height:0.90px;background:#000;"></div>
<div style="left:414.80px;top:570.00px;width:157.70px;height:18.00px;background:#484848;"></div>
<div style="left:414.80px;top:570.00px;width:156.60px;height:16.90px;background:#ffffff;"></div>
<div style="left:415.80px;top:571.00px;width:155.60px;height:15.90px;background:#9a9a9a;"></div>
<div style="left:415.80px;top:571.00px;width:154.60px;height:14.90px;background:#e2e2e2;"></div>
<span style="left:484.00px;top:575.00px;font-size:10px;font-family:'Liberation Serif', serif;color:#000;letter-spacing:-0.891px;">Done</span>
</div></body></html>
